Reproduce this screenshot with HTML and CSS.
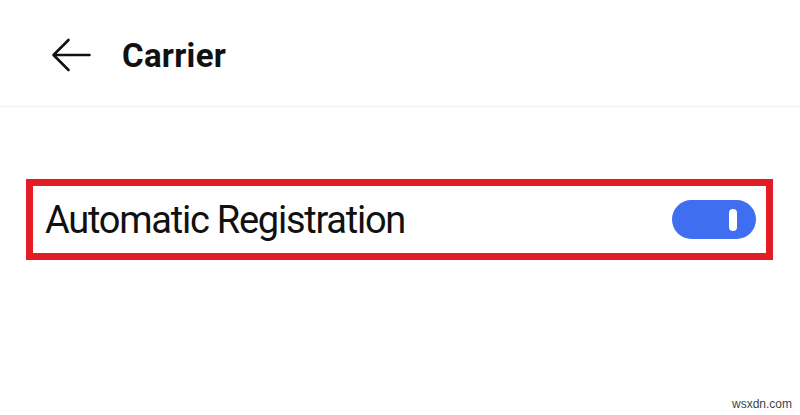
FILE: index.html
```html
<!DOCTYPE html>
<html>
<head>
<meta charset="utf-8">
<link rel="stylesheet" href="styles.css">
</head>
<body>
<div class="screen">
  <header class="topbar">
    <svg class="back" width="40" height="34" viewBox="0 0 40 34" fill="none" stroke="#111" stroke-width="2.6" stroke-linecap="round" stroke-linejoin="round">
      <path d="M38.5 17H2.5M17.5 2L2.5 17L17.5 32"/>
    </svg>
    <h1 class="title">Carrier</h1>
  </header>
  <div class="row">
    <span class="label">Automatic Registration</span>
    <div class="toggle"><span class="knob"></span></div>
  </div>
  <div class="mark">wsxdn.com</div>
</div>
</body>
</html>
```
FILE: styles.css
```css
html, body {
  margin: 0;
  padding: 0;
  background: #fff;
}
.screen {
  position: relative;
  width: 800px;
  height: 415px;
  overflow: hidden;
  font-family: Roboto, "Liberation Sans", sans-serif;
  color: #111;
}
.topbar {
  box-sizing: border-box;
  height: 107px;
  padding: 4px 0 0 51px;
  display: flex;
  align-items: center;
  gap: 31px;
  border-bottom: 1px solid #f1f1f1;
}
.back {
  display: block;
}
.title {
  margin: 0;
  font-size: 33px;
  font-weight: 700;
  line-height: 1;
  letter-spacing: 0.3px;
}
.row {
  box-sizing: border-box;
  margin: 72px 0 0 26px;
  width: 747px;
  height: 81px;
  border: 7px solid #e31c25;
  display: flex;
  align-items: center;
  justify-content: space-between;
  padding: 0 10px 0 12px;
}
.label {
  font-size: 38px;
  font-weight: 400;
  line-height: 1;
  letter-spacing: -1.25px;
  color: #111;
}
.toggle {
  box-sizing: border-box;
  width: 84px;
  height: 39px;
  border-radius: 20px;
  background: #3f6ef0;
  display: flex;
  align-items: center;
  justify-content: flex-end;
  padding-right: 19px;
}
.knob {
  display: block;
  width: 8px;
  height: 22px;
  border-radius: 4px;
  background: #fff;
}
.mark {
  position: absolute;
  right: 8px;
  bottom: 4px;
  font-family: "Liberation Sans", Arial, sans-serif;
  font-size: 12px;
  color: #444;
}
```
